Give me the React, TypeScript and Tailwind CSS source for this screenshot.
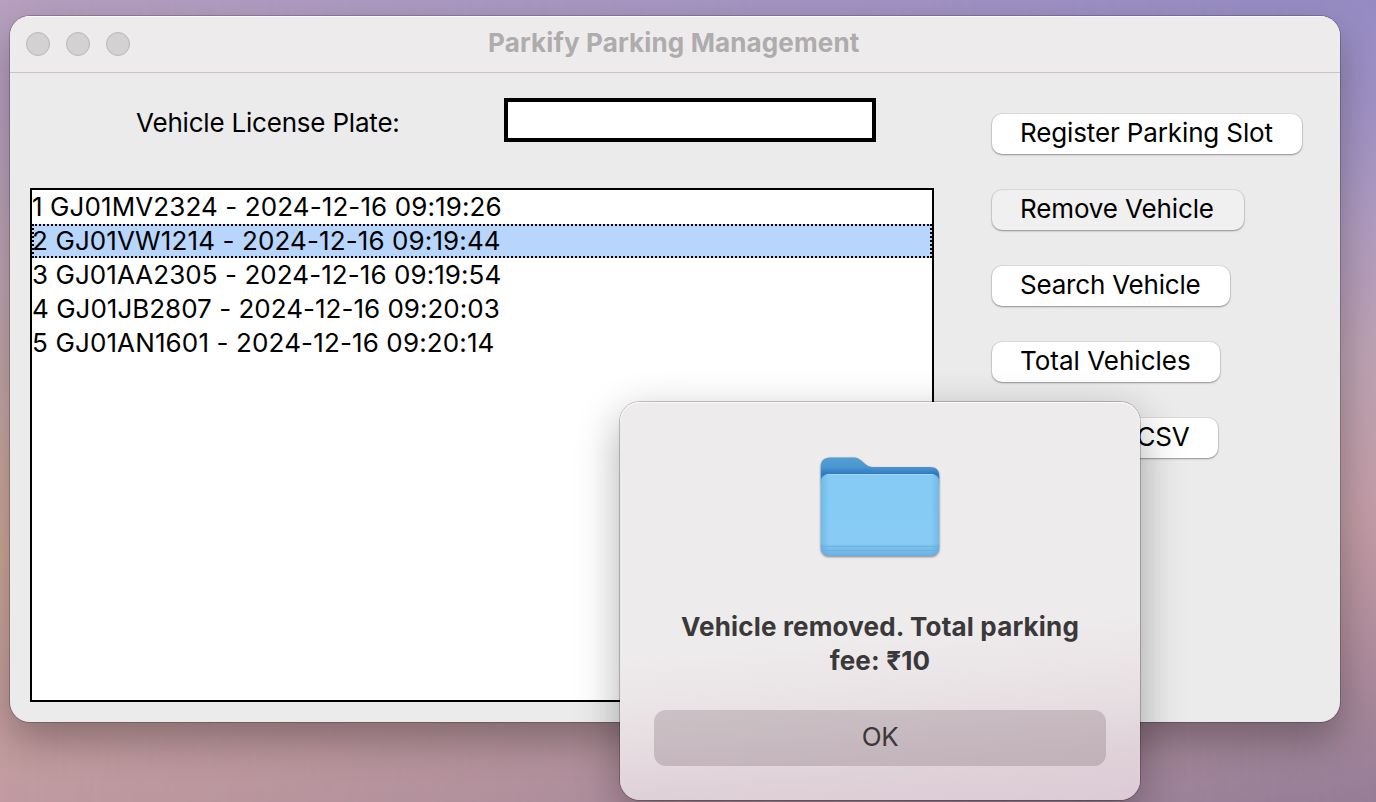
import React from "react";

const rows = [
  { text: "1 GJ01MV2324 - 2024-12-16 09:19:26", track: "tracking-[0.1px]" },
  { text: "2 GJ01VW1214 - 2024-12-16 09:19:44", track: "tracking-[0.11px]", selected: true },
  { text: "3 GJ01AA2305 - 2024-12-16 09:19:54", track: "tracking-[0.06px]" },
  { text: "4 GJ01JB2807 - 2024-12-16 09:20:03", track: "tracking-[0.01px]" },
  { text: "5 GJ01AN1601 - 2024-12-16 09:20:14", track: "tracking-[0.13px]" },
];

const actions = [
  { text: "Register Parking Slot", look: "w-[310px] bg-white tracking-[-0.13px]" },
  { text: "Remove Vehicle", look: "w-[252px] bg-[#f0f0f0] tracking-[-0.13px]" },
  { text: "Search Vehicle", look: "w-[238px] bg-white tracking-[-0.2px]" },
  { text: "Total Vehicles", look: "w-[228px] bg-white" },
  { text: "Export to CSV", look: "w-[226px] bg-white tracking-[-0.2px]" },
];

function FolderIcon() {
  return (
    <svg width="128" height="110" viewBox="0 0 128 110" className="overflow-visible drop-shadow-[0_1px_1px_rgba(0,0,0,0.45)]">
      <defs>
        <linearGradient id="back" gradientUnits="userSpaceOnUse" x1="0" y1="5" x2="0" y2="30">
          <stop offset="0" stopColor="#559fd4" />
          <stop offset="0.4" stopColor="#4a96d0" />
          <stop offset="0.68" stopColor="#3079c3" />
          <stop offset="1" stopColor="#3a84c8" />
        </linearGradient>
        <linearGradient id="front" x1="0" y1="0" x2="0" y2="1">
          <stop offset="0" stopColor="#86cbf5" />
          <stop offset="0.85" stopColor="#88ccf6" />
          <stop offset="0.87" stopColor="#7fc4ef" />
          <stop offset="0.95" stopColor="#74b9e7" />
          <stop offset="1" stopColor="#69afe1" />
        </linearGradient>
        <linearGradient id="edge" x1="0" y1="0" x2="1" y2="0">
          <stop offset="0" stopColor="#4a95cc" stopOpacity="0.35" />
          <stop offset="0.07" stopColor="#4a95cc" stopOpacity="0" />
          <stop offset="0.93" stopColor="#4a95cc" stopOpacity="0" />
          <stop offset="1" stopColor="#4a95cc" stopOpacity="0.35" />
        </linearGradient>
      </defs>
      <path d="M4.800 15C4.800 9 8 5.500 14 5.500H37C42 5.500 44 7.500 47 10C50 12.700 52 15 58 15H114C120 15 123.200 18 123.200 24V31H4.800Z" fill="url(#back)" />
      <rect x="4.800" y="22" width="118.400" height="82" rx="8" fill="url(#front)" />
      <rect x="4.800" y="22" width="118.400" height="82" rx="8" fill="url(#edge)" />
      <path d="M11 22.500H117" stroke="#a3dafb" strokeWidth="1" />
      <path d="M5 94.500H123M5 98.500H123" stroke="#69b0e0" strokeWidth="1" opacity="0.75" />
    </svg>
  );
}

export default function App() {
  return (
    <div className="relative h-[802px] w-[1376px] overflow-hidden bg-[linear-gradient(180deg,#b7a0c0_0%,#b8a0be_15%,#c0a7b4_35%,#cba89f_58%,#d0a698_70%,#c7a09f_85%,#c19ba0_100%)] font-['Inter','Liberation_Sans',sans-serif] text-[26px] text-black">
      <div className="absolute inset-0 bg-[linear-gradient(180deg,#958bc4_0%,#a092c4_15%,#b09bbf_28%,#bda2b2_45%,#c29ca6_65%,#ae8c9c_82%,#957d97_100%)] [mask-image:linear-gradient(90deg,transparent,black)]" />
      <main className="relative ml-2.5 flex h-[722px] w-[1330px] flex-col pt-4">
        <section className="flex h-[706px] flex-col overflow-hidden rounded-[20px] bg-[#ebebeb] shadow-[0_0_0_1px_rgba(0,0,0,0.2),0_18px_40px_rgba(0,0,0,0.3)]">
          <header className="relative flex h-[57px] shrink-0 items-center border-b border-[#c6c5c6] bg-[#eeebec] pl-4 shadow-[inset_0_1px_0_#fafafa]">
            <div className="flex gap-4">
              <span className="size-6 rounded-full border border-[#b9b7b8] bg-[#d3d1d2]" />
              <span className="size-6 rounded-full border border-[#b9b7b8] bg-[#d3d1d2]" />
              <span className="size-6 rounded-full border border-[#b9b7b8] bg-[#d3d1d2]" />
            </div>
            <h1 className="ml-[358px] whitespace-nowrap pb-0.5 font-bold leading-[54px] tracking-[0.14px] text-[#aeacad]">Parkify Parking Management</h1>
          </header>
          <div className="flex grow">
            <div className="flex w-[924px] flex-col pl-5">
              <div className="flex h-[115px] items-start pt-[25px]">
                <label htmlFor="plate" className="ml-[106px] w-[368px] whitespace-nowrap leading-[50px] tracking-[-0.2px]">Vehicle License Plate:</label>
                <input id="plate" className="h-11 w-[372px] border-4 border-black bg-white" />
              </div>
              <ul className="h-[514px] border-2 border-black bg-white">
                {rows.map((r) => (
                  <li
                    key={r.text}
                    className={`h-[34px] whitespace-nowrap border-2 leading-[29px] ${r.track} ${r.selected ? "border-dotted border-black bg-[#b8d5fc]" : "border-transparent"}`}
                  >
                    <span className="-ml-0.5">{r.text}</span>
                  </li>
                ))}
              </ul>
            </div>
            <nav className="ml-[58px] flex flex-col items-start gap-9 pt-[41px]">
              {actions.map((a) => (
                <button
                  key={a.text}
                  className={`h-10 whitespace-nowrap rounded-[10px] pb-0.5 pl-7 text-left leading-[38px] shadow-[0_0_0_1px_rgba(0,0,0,0.06),0_1px_2px_rgba(0,0,0,0.35)] ${a.look}`}
                >
                  {a.text}
                </button>
              ))}
            </nav>
          </div>
        </section>
      </main>
      <div
        role="dialog"
        className="absolute left-[620px] top-[402px] flex h-[398px] w-[520px] flex-col items-center rounded-[20px] bg-[linear-gradient(175deg,#eeebec_0%,#eeebec_58%,#e8e1e4_74%,#e0d2d9_88%,#dccbd5_100%)] pt-[50px] text-[#3a3839] shadow-[inset_0_1px_0_#fbfafa,0_0_0_1px_rgba(0,0,0,0.22),0_14px_44px_rgba(0,0,0,0.32)]"
      >
        <FolderIcon />
        <p className="mt-[48px] whitespace-nowrap text-center font-bold leading-[34px] tracking-[0.17px]">
          Vehicle removed. Total parking
          <br />
          fee: ₹10
        </p>
        <button className="mt-8 h-14 w-[452px] rounded-xl bg-[rgba(80,55,65,0.2)] pb-0.5 leading-[54px] tracking-[-0.5px]">OK</button>
      </div>
    </div>
  );
}
